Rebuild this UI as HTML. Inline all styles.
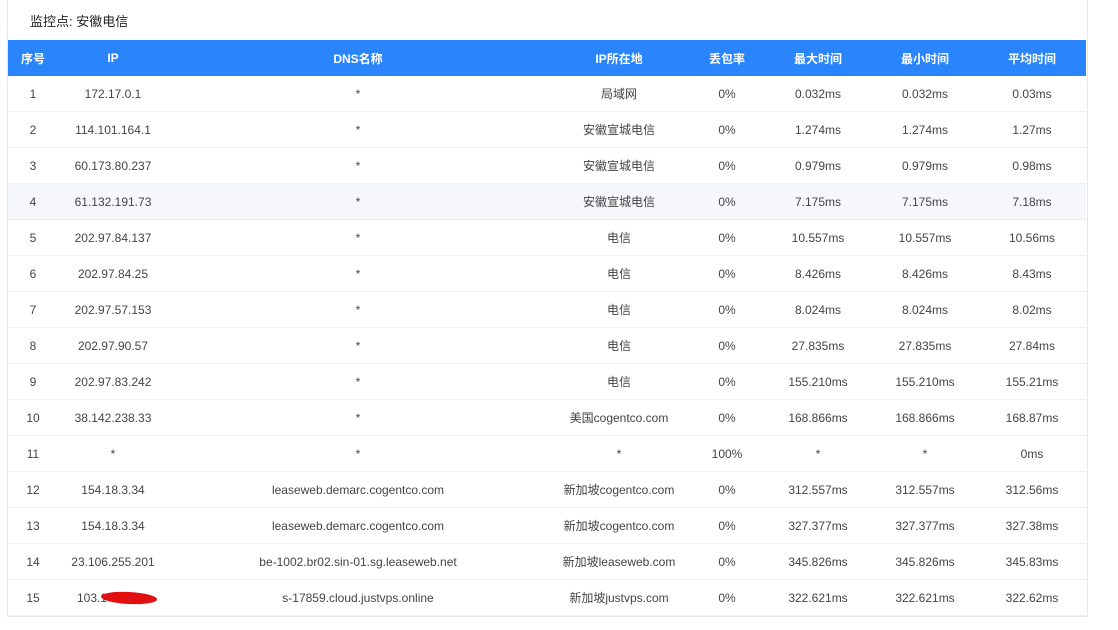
<!DOCTYPE html>
<html><head><meta charset="utf-8"><style>
body{margin:0;background:#fff;font-family:"Liberation Sans","Noto Sans CJK SC",sans-serif;font-size:12px;color:#333;}
.box{position:absolute;left:7px;top:-1px;width:1079px;height:617px;border:1px solid #e8e8e8;border-top:none;}
.title{position:absolute;left:30px;top:11px;font-size:13px;color:#222;}
table{position:absolute;left:8px;top:40px;width:1078px;border-collapse:collapse;table-layout:fixed;}
th{background:#2a84fc;color:#fff;font-weight:bold;height:36px;padding:0;font-size:12px;}
td{height:35px;border-bottom:1px solid #ebeef5;text-align:center;padding:0;color:#444;}
tr.g td{background:#f5f7fa;}
.red{display:inline-block;width:56px;height:12px;background:#e01010;border-radius:50%;vertical-align:middle;margin-left:-6px;transform:rotate(3deg);}
</style></head><body>
<div class="box"></div>
<div class="title">监控点: 安徽电信</div>
<table>
<colgroup><col style="width:50px"><col style="width:110px"><col style="width:380px"><col style="width:142px"><col style="width:74px"><col style="width:108px"><col style="width:106px"><col style="width:108px"></colgroup>
<tr><th>序号</th><th>IP</th><th>DNS名称</th><th>IP所在地</th><th>丢包率</th><th>最大时间</th><th>最小时间</th><th>平均时间</th></tr>
<tr><td>1</td><td>172.17.0.1</td><td>*</td><td>局域网</td><td>0%</td><td>0.032ms</td><td>0.032ms</td><td>0.03ms</td></tr>
<tr><td>2</td><td>114.101.164.1</td><td>*</td><td>安徽宣城电信</td><td>0%</td><td>1.274ms</td><td>1.274ms</td><td>1.27ms</td></tr>
<tr><td>3</td><td>60.173.80.237</td><td>*</td><td>安徽宣城电信</td><td>0%</td><td>0.979ms</td><td>0.979ms</td><td>0.98ms</td></tr>
<tr class="g"><td>4</td><td>61.132.191.73</td><td>*</td><td>安徽宣城电信</td><td>0%</td><td>7.175ms</td><td>7.175ms</td><td>7.18ms</td></tr>
<tr><td>5</td><td>202.97.84.137</td><td>*</td><td>电信</td><td>0%</td><td>10.557ms</td><td>10.557ms</td><td>10.56ms</td></tr>
<tr><td>6</td><td>202.97.84.25</td><td>*</td><td>电信</td><td>0%</td><td>8.426ms</td><td>8.426ms</td><td>8.43ms</td></tr>
<tr><td>7</td><td>202.97.57.153</td><td>*</td><td>电信</td><td>0%</td><td>8.024ms</td><td>8.024ms</td><td>8.02ms</td></tr>
<tr><td>8</td><td>202.97.90.57</td><td>*</td><td>电信</td><td>0%</td><td>27.835ms</td><td>27.835ms</td><td>27.84ms</td></tr>
<tr><td>9</td><td>202.97.83.242</td><td>*</td><td>电信</td><td>0%</td><td>155.210ms</td><td>155.210ms</td><td>155.21ms</td></tr>
<tr><td>10</td><td>38.142.238.33</td><td>*</td><td>美国cogentco.com</td><td>0%</td><td>168.866ms</td><td>168.866ms</td><td>168.87ms</td></tr>
<tr><td>11</td><td>*</td><td>*</td><td>*</td><td>100%</td><td>*</td><td>*</td><td>0ms</td></tr>
<tr><td>12</td><td>154.18.3.34</td><td>leaseweb.demarc.cogentco.com</td><td>新加坡cogentco.com</td><td>0%</td><td>312.557ms</td><td>312.557ms</td><td>312.56ms</td></tr>
<tr><td>13</td><td>154.18.3.34</td><td>leaseweb.demarc.cogentco.com</td><td>新加坡cogentco.com</td><td>0%</td><td>327.377ms</td><td>327.377ms</td><td>327.38ms</td></tr>
<tr><td>14</td><td>23.106.255.201</td><td>be-1002.br02.sin-01.sg.leaseweb.net</td><td>新加坡leaseweb.com</td><td>0%</td><td>345.826ms</td><td>345.826ms</td><td>345.83ms</td></tr>
<tr><td>15</td><td style="text-align:left;padding-left:19px">103.1<span class="red"></span></td><td>s-17859.cloud.justvps.online</td><td>新加坡justvps.com</td><td>0%</td><td>322.621ms</td><td>322.621ms</td><td>322.62ms</td></tr>
</table>
</body></html>
